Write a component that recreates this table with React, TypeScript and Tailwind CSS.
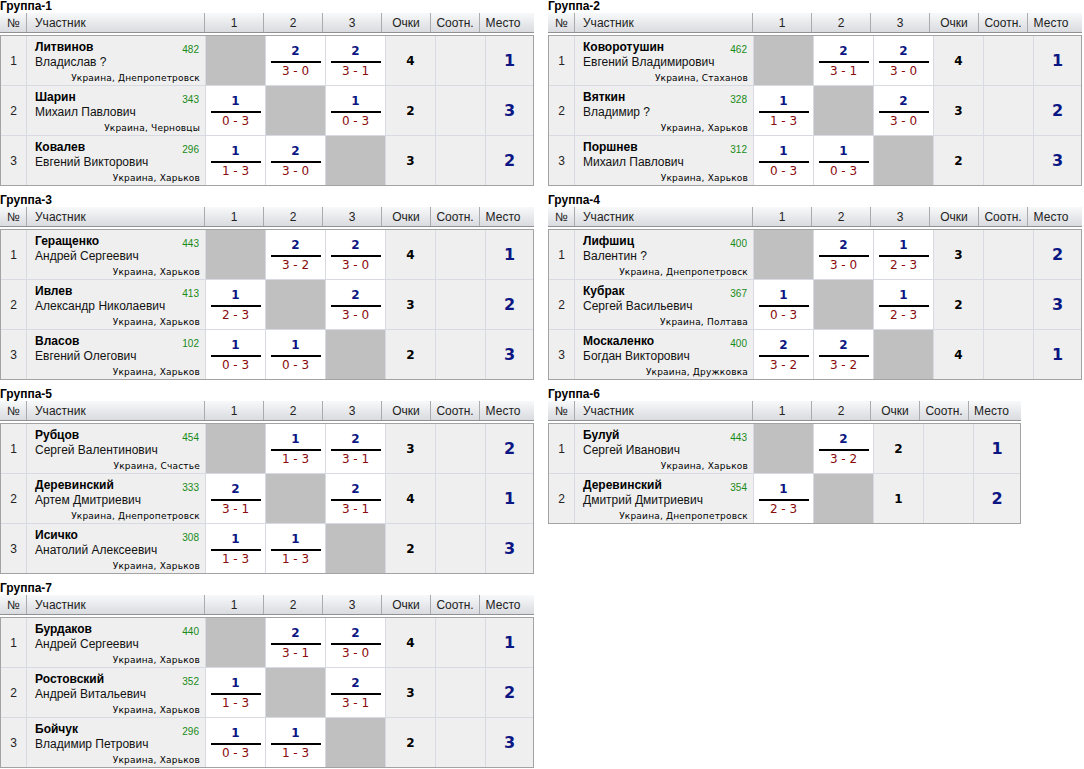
import React from "react";

type Result = { win: number; score: string } | null;

type Player = {
    surname: string;
    name: string;
    rating: number;
    city: string;
    results: Result[];
    points: number;
    place: number;
};

type Group = {
    title: string;
    players: Player[];
};

const r = (win: number, score: string): Result => ({ win, score });

const groups: Group[] = [
    {
        title: "Группа-1",
        players: [
            { surname: "Литвинов", name: "Владислав ?", rating: 482, city: "Украина, Днепропетровск", results: [null, r(2, "3 - 0"), r(2, "3 - 1")], points: 4, place: 1 },
            { surname: "Шарин", name: "Михаил Павлович", rating: 343, city: "Украина, Черновцы", results: [r(1, "0 - 3"), null, r(1, "0 - 3")], points: 2, place: 3 },
            { surname: "Ковалев", name: "Евгений Викторович", rating: 296, city: "Украина, Харьков", results: [r(1, "1 - 3"), r(2, "3 - 0"), null], points: 3, place: 2 },
        ],
    },
    {
        title: "Группа-2",
        players: [
            { surname: "Коворотушин", name: "Евгений Владимирович", rating: 462, city: "Украина, Стаханов", results: [null, r(2, "3 - 1"), r(2, "3 - 0")], points: 4, place: 1 },
            { surname: "Вяткин", name: "Владимир ?", rating: 328, city: "Украина, Харьков", results: [r(1, "1 - 3"), null, r(2, "3 - 0")], points: 3, place: 2 },
            { surname: "Поршнев", name: "Михаил Павлович", rating: 312, city: "Украина, Харьков", results: [r(1, "0 - 3"), r(1, "0 - 3"), null], points: 2, place: 3 },
        ],
    },
    {
        title: "Группа-3",
        players: [
            { surname: "Геращенко", name: "Андрей Сергеевич", rating: 443, city: "Украина, Харьков", results: [null, r(2, "3 - 2"), r(2, "3 - 0")], points: 4, place: 1 },
            { surname: "Ивлев", name: "Александр Николаевич", rating: 413, city: "Украина, Харьков", results: [r(1, "2 - 3"), null, r(2, "3 - 0")], points: 3, place: 2 },
            { surname: "Власов", name: "Евгений Олегович", rating: 102, city: "Украина, Харьков", results: [r(1, "0 - 3"), r(1, "0 - 3"), null], points: 2, place: 3 },
        ],
    },
    {
        title: "Группа-4",
        players: [
            { surname: "Лифшиц", name: "Валентин ?", rating: 400, city: "Украина, Днепропетровск", results: [null, r(2, "3 - 0"), r(1, "2 - 3")], points: 3, place: 2 },
            { surname: "Кубрак", name: "Сергей Васильевич", rating: 367, city: "Украина, Полтава", results: [r(1, "0 - 3"), null, r(1, "2 - 3")], points: 2, place: 3 },
            { surname: "Москаленко", name: "Богдан Викторович", rating: 400, city: "Украина, Дружковка", results: [r(2, "3 - 2"), r(2, "3 - 2"), null], points: 4, place: 1 },
        ],
    },
    {
        title: "Группа-5",
        players: [
            { surname: "Рубцов", name: "Сергей Валентинович", rating: 454, city: "Украина, Счастье", results: [null, r(1, "1 - 3"), r(2, "3 - 1")], points: 3, place: 2 },
            { surname: "Деревинский", name: "Артем Дмитриевич", rating: 333, city: "Украина, Днепропетровск", results: [r(2, "3 - 1"), null, r(2, "3 - 1")], points: 4, place: 1 },
            { surname: "Исичко", name: "Анатолий Алексеевич", rating: 308, city: "Украина, Харьков", results: [r(1, "1 - 3"), r(1, "1 - 3"), null], points: 2, place: 3 },
        ],
    },
    {
        title: "Группа-6",
        players: [
            { surname: "Булуй", name: "Сергей Иванович", rating: 443, city: "Украина, Харьков", results: [null, r(2, "3 - 2")], points: 2, place: 1 },
            { surname: "Деревинский", name: "Дмитрий Дмитриевич", rating: 354, city: "Украина, Днепропетровск", results: [r(1, "2 - 3"), null], points: 1, place: 2 },
        ],
    },
    {
        title: "Группа-7",
        players: [
            { surname: "Бурдаков", name: "Андрей Сергеевич", rating: 440, city: "Украина, Харьков", results: [null, r(2, "3 - 1"), r(2, "3 - 0")], points: 4, place: 1 },
            { surname: "Ростовский", name: "Андрей Витальевич", rating: 352, city: "Украина, Харьков", results: [r(1, "1 - 3"), null, r(2, "3 - 1")], points: 3, place: 2 },
            { surname: "Бойчук", name: "Владимир Петрович", rating: 296, city: "Украина, Харьков", results: [r(1, "0 - 3"), r(1, "1 - 3"), null], points: 2, place: 3 },
        ],
    },
];

const sans = "font-['Liberation_Sans',Arial,sans-serif]";
const dejavu = "font-['DejaVu_Sans',Verdana,sans-serif]";

// column templates: 3-player and 2-player groups
const cols3 = "grid-cols-[25px_178px_59px_59px_59px_49px_49px_47px]";
const cols2 = "grid-cols-[25px_178px_59px_59px_49px_49px_46px]";

const HeaderCell = ({ children, first, left }: { children?: React.ReactNode; first?: boolean; left?: boolean }) => (
    <div
        className={
            "flex h-[19px] items-center text-[12px] text-[#222] " +
            (first ? "" : "border-l border-[#a9abae] ") +
            (left ? "justify-start pl-[8px]" : "justify-center")
        }
    >
        {children}
    </div>
);

const ResultCell = ({ result }: { result: Result }) => {
    if (!result) return <div className="h-[49px] bg-[#c0c0c0]" />;
    return (
        <div className="flex h-[49px] flex-col items-center bg-white pt-[8px]">
            <span className={`${dejavu} text-[12px] font-bold leading-[14px] text-[#0c1683]`}>{result.win}</span>
            <div className="mt-[3px] h-[2px] w-[50px] bg-black" />
            <span className={`${dejavu} mt-[1px] text-[12px] leading-[14px] text-[#8a0b0b]`}>{result.score}</span>
        </div>
    );
};

const PlayerRow = ({ player, index }: { player: Player; index: number }) => (
    <>
        <div className={`${sans} flex h-[49px] items-center justify-center bg-[#efefef] text-[12px] text-[#222]`}>
            {index + 1}
        </div>
        <div className={`${sans} flex h-[49px] flex-col bg-[#efefef] pl-[8px] pr-[5px] pt-[4px]`}>
            <div className="flex items-start justify-between">
                <span className="text-[12px] font-bold leading-[14px] text-black">{player.surname}</span>
                <span className="mt-[4px] pr-[1px] text-[10px] leading-[11px] text-[#178a17]">{player.rating}</span>
            </div>
            <span className="text-[12px] leading-[14px] text-[#111]">{player.name}</span>
            <span className={`${dejavu} mt-[4px] text-right text-[9px] leading-[11px] tracking-[0.2px] text-black`}>
                {player.city}
            </span>
        </div>
        {player.results.map((res, i) => (
            <ResultCell key={i} result={res} />
        ))}
        <div className={`${dejavu} flex h-[49px] items-center justify-center bg-[#efefef] text-[12px] font-bold text-black`}>
            {player.points}
        </div>
        <div className="h-[49px] bg-[#efefef]" />
        <div className={`${dejavu} flex h-[49px] items-center justify-center bg-[#efefef] text-[16px] font-bold text-[#0c1683]`}>
            {player.place}
        </div>
    </>
);

const GroupTable = ({ group }: { group: Group }) => {
    const n = group.players.length;
    const colsClass = n === 3 ? cols3 : cols2;
    const width = n === 3 ? "w-[534px]" : "w-[473px]";
    return (
        <div className="h-[194px]">
            <div className={`${sans} h-[13px] text-[12px] font-bold leading-[13px] text-black`}>{group.title}</div>
            <div className={`${sans} ${width} grid ${colsClass} border-b border-[#8f9194] bg-linear-to-b from-[#f8f9fa] to-[#d9dbdf] px-px`}>
                <HeaderCell first>№</HeaderCell>
                <HeaderCell left>Участник</HeaderCell>
                {group.players.map((_, i) => (
                    <HeaderCell key={i}>{i + 1}</HeaderCell>
                ))}
                <HeaderCell>Очки</HeaderCell>
                <HeaderCell>Соотн.</HeaderCell>
                <HeaderCell>Место</HeaderCell>
            </div>
            <div className={`${width} mt-[2px] grid ${colsClass} gap-px border border-[#a3a3a3] bg-[#d7dae0]`}>
                {group.players.map((p, i) => (
                    <PlayerRow key={i} player={p} index={i} />
                ))}
            </div>
        </div>
    );
};

export default function App() {
    return (
        <div className="grid w-[1084px] grid-cols-[534px_534px] content-start gap-x-[14px] bg-white">
            {groups.map((g) => (
                <GroupTable key={g.title} group={g} />
            ))}
        </div>
    );
}
